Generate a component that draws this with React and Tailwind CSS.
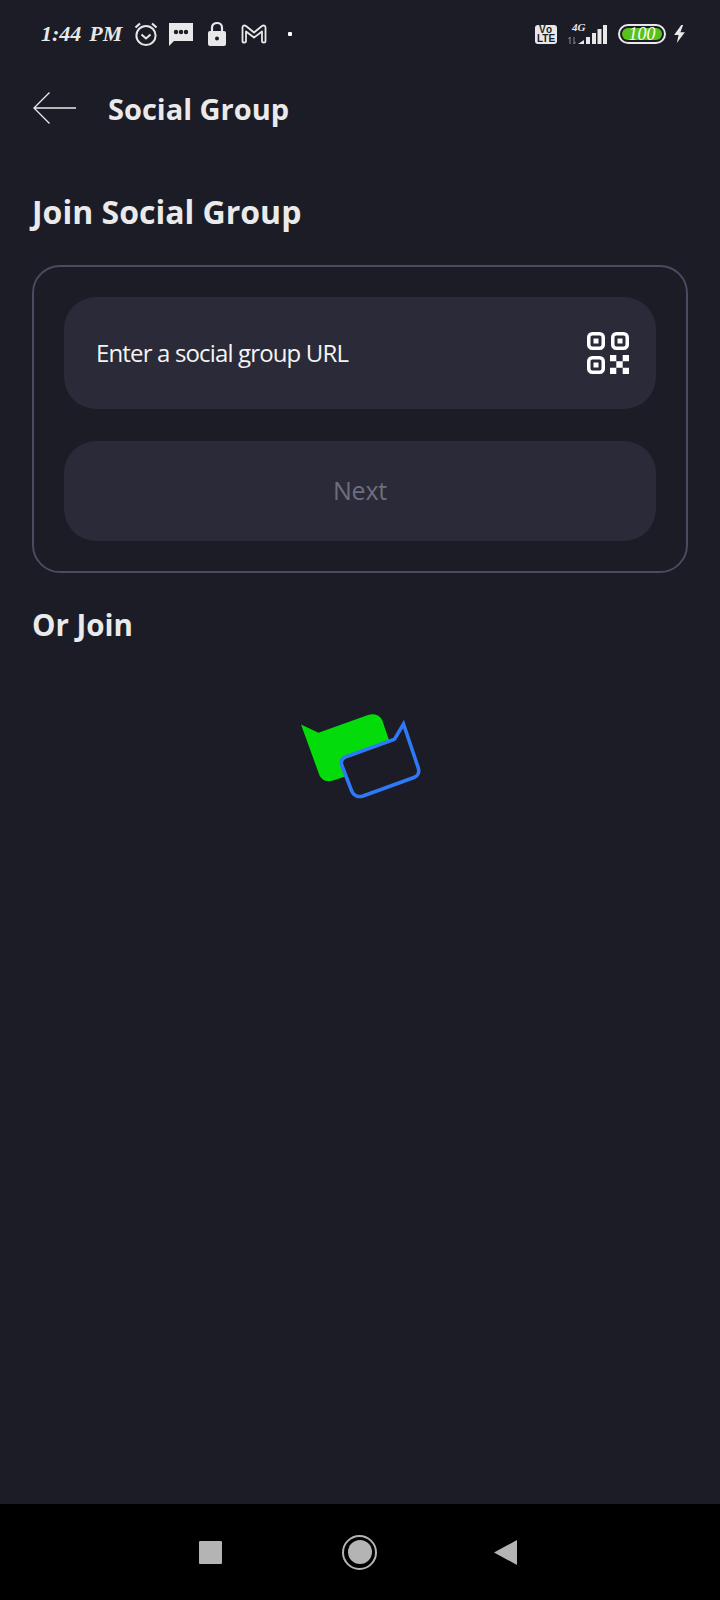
import React from 'react';

const openSans = { fontFamily: '"Open Sans", sans-serif' };

function StatusBar() {
  return (
    <div className="flex items-center justify-between h-[68px] pl-[41px] pr-[34px] text-[#e8e8e8]">
      <div className="flex items-center">
        <span className="font-['Liberation_Serif',serif] italic font-bold text-[22px] leading-none w-[92px] flex gap-[8px]">
          <span>1:44</span>
          <span>PM</span>
        </span>
        <svg width="26" height="26" viewBox="0 0 26 26" fill="none" stroke="currentColor" strokeWidth="2">
          <circle cx="13" cy="14.5" r="9.6" />
          <path d="M8.5 13.5 L13 17.5 L17.5 13.5" />
          <path d="M2.5 6.5 L7 2.5 M23.5 6.5 L19 2.5" strokeWidth="2.2" />
        </svg>
        <svg width="26" height="24" viewBox="0 0 26 24" className="ml-[9px]">
          <path d="M1 1 H25 V19 H6 L1 24 Z" fill="currentColor" />
          <circle cx="8" cy="10" r="2.2" fill="#1b1c26" />
          <circle cx="13" cy="10" r="2.2" fill="#1b1c26" />
          <circle cx="18" cy="10" r="2.2" fill="#1b1c26" />
        </svg>
        <svg width="20" height="26" viewBox="0 0 20 26" className="ml-[13px]">
          <path d="M5 11 V6.5 C5 0.5 15 0.5 15 6.5 V11" fill="none" stroke="currentColor" strokeWidth="2.2" />
          <rect x="1" y="10" width="18" height="15" rx="2" fill="currentColor" />
          <circle cx="10" cy="17.5" r="2" fill="#1b1c26" />
        </svg>
        <svg width="26" height="20" viewBox="0 0 26 20" fill="none" stroke="currentColor" strokeWidth="1.8" strokeLinejoin="round" className="ml-[14px]">
          <path d="M1.5 17.5 V3.5 C1.5 1.5 3.5 1 5 2 L13 8.5 L21 2 C22.5 1 24.5 1.5 24.5 3.5 V17.5 C24.5 19 21 19 21 17.5 V7.5 L13 13.5 L5 7.5 V17.5 C5 19 1.5 19 1.5 17.5 Z" />
        </svg>
        <div className="w-[4px] h-[4px] bg-white rounded-[1px] ml-[21px]" />
      </div>
      <div className="flex items-center">
        <div className="w-[22px] h-[19px] bg-[#e8e8e8] rounded-[3px] flex flex-col items-center justify-center font-['Liberation_Sans',sans-serif] font-bold text-[10px] leading-[9px] text-[#1b1c26]">
          <span className="tracking-[1px]">Vo</span>
          <span>LTE</span>
        </div>
        <div className="relative w-[40px] h-[24px] ml-[11px]">
          <span className="absolute left-[4px] top-0 font-['Liberation_Serif',serif] italic font-bold text-[11px] leading-none">4G</span>
          <svg width="40" height="24" viewBox="0 0 40 24" className="absolute left-0 top-0">
            <path d="M2 22 V15 L0.5 17 M6 15 V22 L7.5 20" stroke="#8a8a8a" strokeWidth="1" fill="none" />
            <path d="M10 22 L16 18 V22 Z" fill="currentColor" />
            <rect x="18" y="15" width="4" height="7" fill="currentColor" />
            <rect x="24" y="11" width="4" height="11" fill="currentColor" />
            <rect x="29.5" y="7" width="4" height="15" fill="currentColor" />
            <rect x="35" y="3" width="4" height="19" fill="currentColor" />
          </svg>
        </div>
        <div className="ml-[10px] w-[48px] h-[20px] border-2 border-[#e8e8e8] rounded-full p-[2px] flex">
          <div className="flex-1 bg-[#58c21a] rounded-full flex items-center justify-center font-['Liberation_Serif',serif] italic text-[18px] leading-none text-white">100</div>
        </div>
        <svg width="13" height="18" viewBox="0 0 14 20" fill="currentColor" className="ml-[7px]">
          <path d="M9 0 L1 11 H6 L4 20 L13 8 H8 L11 0 Z" />
        </svg>
      </div>
    </div>
  );
}

function QrIcon() {
  return (
    <svg width="42" height="42" viewBox="0 0 42 42" fill="none">
      <rect x="1.75" y="1.75" width="14.5" height="14.5" rx="3.5" stroke="#fff" strokeWidth="3.5" />
      <rect x="6.5" y="6.5" width="5" height="5" fill="#fff" />
      <rect x="25.75" y="1.75" width="14.5" height="14.5" rx="3.5" stroke="#fff" strokeWidth="3.5" />
      <rect x="30.5" y="6.5" width="5" height="5" fill="#fff" />
      <rect x="1.75" y="25.75" width="14.5" height="14.5" rx="3.5" stroke="#fff" strokeWidth="3.5" />
      <rect x="6.5" y="30.5" width="5" height="5" fill="#fff" />
      <path d="M23 23 H29.3 V29.3 H23 Z M35.7 23 H42 V29.3 H35.7 Z M29.3 29.3 H35.7 V35.7 H29.3 Z M23 35.7 H29.3 V42 H23 Z M35.7 35.7 H42 V42 H35.7 Z" fill="#fff" />
    </svg>
  );
}

function EmptyLogo() {
  return (
    <svg width="140" height="110" viewBox="0 0 140 110" fill="none">
      <path d="M11 24.5 L28.5 32.7 L78 15 C84 13 90.5 15 92.5 21 L100 43 L60 75 L43 80.5 C36.5 82.5 31 80 29 74 Z" fill="#03dc0a" />
      <path d="M113.5 24 L128.3 68 C129.5 72 128 76 124 77.5 L73 96 C68 97.5 63.5 95.5 61.7 91 L51.7 65 C50.5 61 52 58 56.7 56.5 L104 39.5 L105 38.5 Z" fill="#1b1c26" stroke="#2f78f6" strokeWidth="3.6" strokeLinejoin="miter" />
    </svg>
  );
}

function NavBar() {
  return (
    <div className="mt-auto h-[96px] bg-black flex items-center pl-[199px]">
      <div className="w-[23px] h-[23px] bg-[#b4b4b4] rounded-[1px] mr-[120px]" />
      <div className="w-[35px] h-[35px] rounded-full border-[2.5px] border-[#b4b4b4] flex items-center justify-center">
        <div className="w-[24px] h-[24px] rounded-full bg-[#b4b4b4]" />
      </div>
      <svg width="23" height="25" viewBox="0 0 23 25" className="ml-[117px]">
        <path d="M0 12.5 L23 0 V25 Z" fill="#b4b4b4" />
      </svg>
    </div>
  );
}

export default function App() {
  return (
    <div className="w-[720px] h-[1600px] bg-[#1b1c26] flex flex-col text-[#eaeaea]" style={openSans}>
      <StatusBar />
      <div className="flex items-center h-[80px] pl-[33px]">
        <svg width="43" height="32" viewBox="0 0 43 32" fill="none" stroke="#eaeaea" strokeWidth="1.3">
          <path d="M16.5 0.5 L1 16 L16.5 31.5 M1 16 H43" />
        </svg>
        <h1 className="ml-[32px] text-[29px] leading-none font-bold">Social Group</h1>
      </div>
      <div className="px-[32px]">
        <h2 className="mt-[42px] text-[32px] leading-[44px] font-bold">Join Social Group</h2>
        <div className="mt-[31px] h-[308px] border-2 border-[#4a4a60] rounded-[28px] p-[30px] flex flex-col gap-[32px]">
          <div className="h-[112px] rounded-[32px] bg-[#2a2a38] flex items-center justify-between pl-[32px] pr-[27px]">
            <span className="text-[24px] tracking-[-0.85px] text-[#f4f4f4]">Enter a social group URL</span>
            <QrIcon />
          </div>
          <div className="h-[100px] rounded-[32px] bg-[#2a2a38] flex items-center justify-center text-[25px] tracking-[-0.2px] text-[#6e6e7e]">
            Next
          </div>
        </div>
        <h3 className="mt-[32px] text-[29.5px] leading-[40px] font-bold">Or Join</h3>
      </div>
      <div className="mt-[55px] flex justify-center">
        <EmptyLogo />
      </div>
      <NavBar />
    </div>
  );
}
